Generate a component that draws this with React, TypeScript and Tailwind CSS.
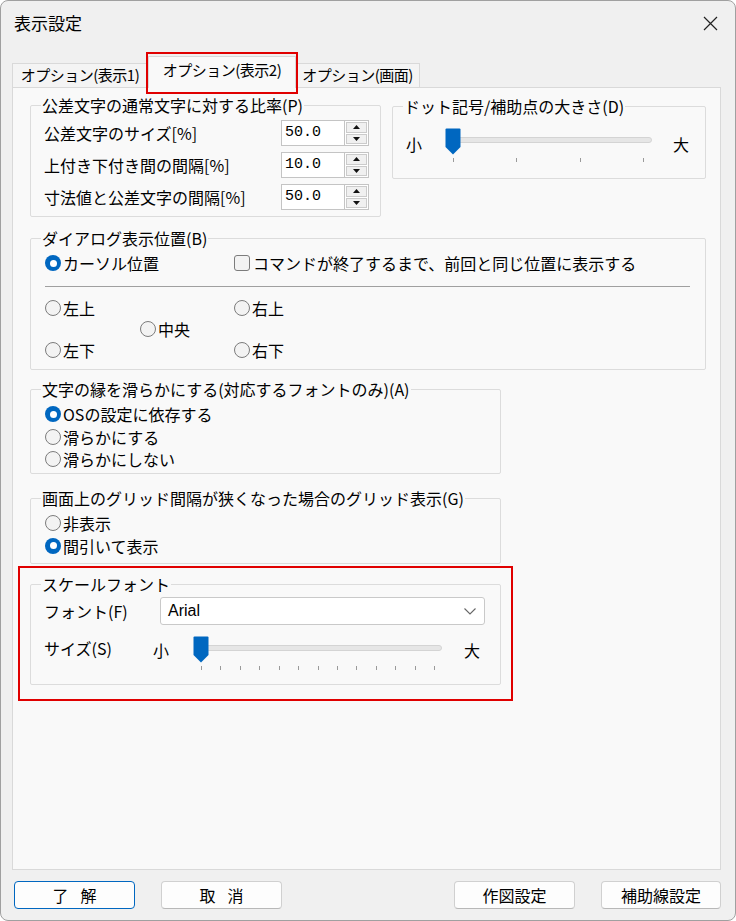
import React from "react";

type Kids = { children?: React.ReactNode };

function GroupBox({
  title,
  className,
  children,
}: Kids & { title: string; className: string }) {
  return (
    <fieldset
      className={`min-w-0 border border-[#dcdcdc] rounded-[2px] pl-[10px] ${className}`}
    >
      <legend className="px-[1px] text-[16px] leading-[20px]">{title}</legend>
      {children}
    </fieldset>
  );
}

function Radio({ label, checked }: { label: string; checked?: boolean }) {
  return (
    <div className="flex items-center gap-[2px] h-full">
      {checked ? (
        <span className="w-[16px] h-[16px] shrink-0 rounded-full bg-[#0067c0] flex items-center justify-center">
          <span className="w-[7px] h-[7px] rounded-full bg-white" />
        </span>
      ) : (
        <span className="w-[16px] h-[16px] shrink-0 rounded-full border border-[#7c7c7c] bg-[#f3f3f3]" />
      )}
      <span className="text-[16px] leading-[20px] whitespace-nowrap">{label}</span>
    </div>
  );
}

function Spin({ value }: { value: string }) {
  return (
    <div className="flex h-[26px] w-[88px]">
      <div className="w-[63px] h-full bg-white border border-r-0 border-[#c4c4c4] flex items-center pl-[3px] font-['Liberation_Mono',monospace] text-[15px]">
        {value}
      </div>
      <div className="w-[25px] h-full flex flex-col gap-[1px] p-[1px] border border-[#c4c4c4] bg-white">
        <div className="flex-1 flex items-center justify-center bg-[#f0f0f0] border border-[#cbcbcb]">
          <svg width="7" height="4">
            <path d="M3.5 0 L7 4 H0 Z" fill="#111" />
          </svg>
        </div>
        <div className="flex-1 flex items-center justify-center bg-[#f0f0f0] border border-[#cbcbcb]">
          <svg width="7" height="4">
            <path d="M0 0 H7 L3.5 4 Z" fill="#111" />
          </svg>
        </div>
      </div>
    </div>
  );
}

function Slider({ width, ticks }: { width: number; ticks: number[] }) {
  return (
    <svg width={width} height={36} className="block shrink-0">
      <rect
        x={4.5}
        y={9.5}
        width={width - 8}
        height={5}
        rx={2.5}
        fill="#e6e6e6"
        stroke="#d4d4d4"
      />
      {ticks.map((t) => (
        <line
          key={t}
          x1={t + 0.5}
          x2={t + 0.5}
          y1={30}
          y2={34}
          stroke="#9a9a9a"
        />
      ))}
      <path
        d="M1.5 0.5 H14.5 Q15.5 0.5 15.5 1.5 V19 L8 26.5 L0.5 19 V1.5 Q0.5 0.5 1.5 0.5 Z"
        fill="#0067c0"
      />
    </svg>
  );
}

function Button({
  children,
  primary,
  className,
}: Kids & { primary?: boolean; className: string }) {
  return (
    <div
      className={`h-[28px] rounded-[4px] bg-[#fdfdfd] flex items-center justify-center text-[16px] leading-[20px] border ${
        primary ? "border-[#0067c0]" : "border-[#d0d0d0] border-b-[#b8b8b8]"
      } ${className}`}
    >
      {children}
    </div>
  );
}

const scaleTicks = Array.from({ length: 13 }, (_, i) =>
  Math.round(8 + (i * 233) / 12)
);

export default function App() {
  return (
    <div className="relative w-[736px] h-[921px] overflow-hidden rounded-[8px] border border-[#a0a0a0] bg-[#f0f0f0] text-black font-['Noto_Sans_CJK_JP','Noto_Sans',sans-serif]">
      {/* title bar */}
      <div className="h-[44px] flex items-center justify-between pl-[13px] pr-[17px]">
        <span className="text-[17px] leading-[22px]">表示設定</span>
        <svg width="15" height="15">
          <path d="M1 1 L14 14 M14 1 L1 14" stroke="#222" strokeWidth="1.2" />
        </svg>
      </div>

      {/* tabs */}
      <div className="h-[42px] ml-[11px] flex items-end text-[15px] tracking-[-0.5px]">
        <div className="w-[136px] h-[24px] border border-b-0 border-[#d9d9d9] bg-[#f4f4f4] flex items-center justify-center">
          オプション(表示1)
        </div>
        <div className="relative z-10 w-[148px] h-[32px] -mb-px border border-b-0 border-[#d9d9d9] bg-[#f9f9f9] flex items-center justify-center pb-[4px]">
          オプション(表示2)
        </div>
        <div className="w-[124px] h-[24px] border border-b-0 border-l-0 border-[#d9d9d9] bg-[#f4f4f4] flex items-center justify-center">
          オプション(画面)
        </div>
      </div>

      {/* tab page */}
      <div className="ml-[11px] w-[709px] h-[783px] border border-[#d9d9d9] bg-[#f9f9f9] flex flex-col pl-[17px] pr-[14px] pt-[7px]">
        <div className="flex items-start gap-[11px]">
          <GroupBox title="公差文字の通常文字に対する比率(P)" className="w-[351px] h-[122px]">
            <div className="flex flex-col gap-[6px] mt-[5px]">
              {[
                ["公差文字のサイズ[%]", "50.0"],
                ["上付き下付き間の間隔[%]", "10.0"],
                ["寸法値と公差文字の間隔[%]", "50.0"],
              ].map(([label, v]) => (
                <div key={label} className="flex items-center h-[26px]">
                  <span className="ml-[3px] w-[237px] text-[16px] leading-[20px] whitespace-nowrap">
                    {label}
                  </span>
                  <Spin value={v} />
                </div>
              ))}
            </div>
          </GroupBox>

          <GroupBox title="ドット記号/補助点の大きさ(D)" className="w-[314px] h-[83px] mt-px">
            <div className="flex items-start mt-[12px]">
              <span className="ml-[3px] w-[17px] mt-[6px] text-[16px] leading-[20px]">小</span>
              <span className="ml-[22px]">
                <Slider width={210} ticks={[8, 71, 135, 198]} />
              </span>
              <span className="ml-[18px] mt-[6px] text-[16px] leading-[20px]">大</span>
            </div>
          </GroupBox>
        </div>

        <GroupBox title="ダイアログ表示位置(B)" className="h-[142px] mt-[11px]">
          <div className="flex items-center h-[22px] mt-[4px] ml-[4px]">
            <div className="w-[189px] h-full">
              <Radio label="カーソル位置" checked />
            </div>
            <div className="flex items-center gap-[3px]">
              <span className="w-[16px] h-[16px] rounded-[3px] border border-[#7c7c7c] bg-[#f3f3f3]" />
              <span className="text-[16px] leading-[20px] whitespace-nowrap">
                コマンドが終了するまで、前回と同じ位置に表示する
              </span>
            </div>
          </div>
          <div className="h-px bg-[#a0a0a0] mt-[12px] ml-[4px] mr-[15px]" />
          <div className="grid grid-cols-[95px_94px_auto] grid-rows-[22px_22px] gap-y-[20px] mt-[10px] ml-[4px]">
            <div className="col-start-1 row-start-1">
              <Radio label="左上" />
            </div>
            <div className="col-start-2 row-start-1 row-span-2 self-center h-[22px]">
              <Radio label="中央" />
            </div>
            <div className="col-start-3 row-start-1">
              <Radio label="右上" />
            </div>
            <div className="col-start-1 row-start-2">
              <Radio label="左下" />
            </div>
            <div className="col-start-3 row-start-2">
              <Radio label="右下" />
            </div>
          </div>
        </GroupBox>

        <GroupBox
          title="文字の縁を滑らかにする(対応するフォントのみ)(A)"
          className="w-[471px] h-[95px] mt-[9px]"
        >
          <div className="flex flex-col mt-[4px] ml-[4px]">
            <div className="h-[22.5px]">
              <Radio label="OSの設定に依存する" checked />
            </div>
            <div className="h-[22.5px]">
              <Radio label="滑らかにする" />
            </div>
            <div className="h-[22.5px]">
              <Radio label="滑らかにしない" />
            </div>
          </div>
        </GroupBox>

        <GroupBox
          title="画面上のグリッド間隔が狭くなった場合のグリッド表示(G)"
          className="w-[471px] h-[76px] mt-[14px]"
        >
          <div className="flex flex-col mt-[3px] ml-[4px]">
            <div className="h-[23px]">
              <Radio label="非表示" />
            </div>
            <div className="h-[23px]">
              <Radio label="間引いて表示" checked />
            </div>
          </div>
        </GroupBox>

        <GroupBox title="スケールフォント" className="w-[471px] h-[111px] mt-[10px]">
          <div className="flex items-center h-[28px] mt-[3px]">
            <span className="ml-[3px] w-[116px] text-[16px] leading-[20px]">フォント(F)</span>
            <div className="w-[325px] h-[28px] bg-white border border-[#c9c9c9] rounded-[3px] flex items-center justify-between pl-[7px] pr-[8px]">
              <span className="font-['Liberation_Sans',sans-serif] text-[16px]">Arial</span>
              <svg width="12" height="7">
                <path d="M0.5 0.5 L6 6 L11.5 0.5" fill="none" stroke="#666" strokeWidth="1.1" />
              </svg>
            </div>
          </div>
          <div className="flex items-start mt-[11px]">
            <span className="ml-[3px] w-[109px] mt-[2px] text-[16px] leading-[20px]">サイズ(S)</span>
            <span className="w-[16px] mt-[4px] text-[16px] leading-[20px]">小</span>
            <span className="ml-[24px]">
              <Slider width={252} ticks={scaleTicks} />
            </span>
            <span className="ml-[19px] mt-[4px] text-[16px] leading-[20px]">大</span>
          </div>
        </GroupBox>
      </div>

      {/* buttons */}
      <div className="flex mt-[11px] pl-[13px]">
        <Button primary className="w-[121px] gap-[12px]">
          <span>了</span>
          <span>解</span>
        </Button>
        <Button className="w-[121px] ml-[26px] gap-[12px]">
          <span>取</span>
          <span>消</span>
        </Button>
        <Button className="w-[121px] ml-[172px]">作図設定</Button>
        <Button className="w-[120px] ml-[26px]">補助線設定</Button>
      </div>

      {/* red annotation boxes */}
      <div className="absolute left-[145px] top-[51px] w-[152px] h-[42px] border-2 border-[#e00000] z-20" />
      <div className="absolute left-[17px] top-[565px] w-[495px] h-[135px] border-2 border-[#e00000] z-20" />
    </div>
  );
}
